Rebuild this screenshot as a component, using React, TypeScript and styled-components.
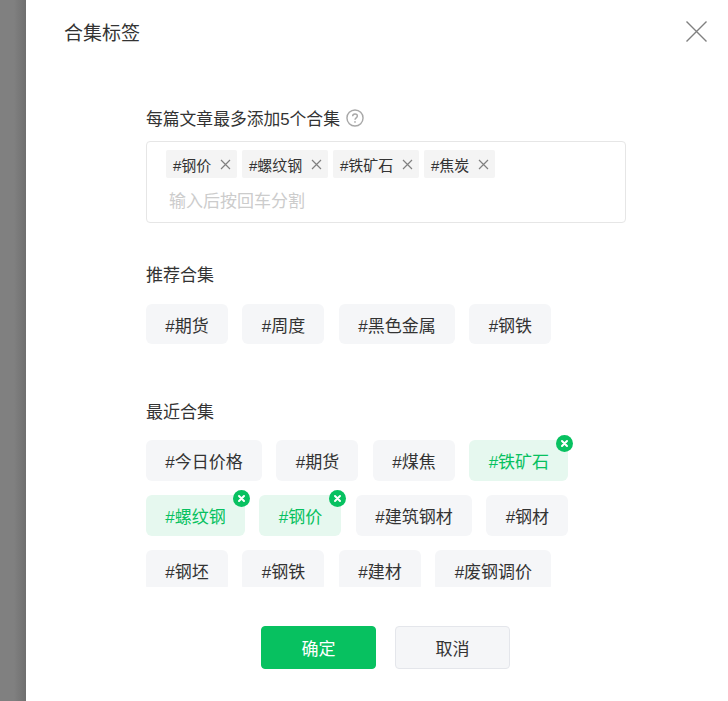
import React from "react";
import styled, { createGlobalStyle } from "styled-components";

const GlobalStyle = createGlobalStyle`
  html, body { margin: 0; padding: 0; height: 100%; background: #fff; }
  body { font-family: "Liberation Sans", "Noto Sans CJK SC", sans-serif; color: #333; }
  * { box-sizing: border-box; }
`;

const Page = styled.div`
  display: flex;
  width: 728px;
  height: 701px;
  overflow: hidden;
`;

const Scrim = styled.div`
  width: 26px;
  flex: none;
  background: linear-gradient(90deg, #808080 0, #808080 14px, #6f6f6f 26px);
`;

const Panel = styled.div`
  flex: 1;
  background: #fff;
  display: flex;
  flex-direction: column;
`;

const Header = styled.div`
  height: 64px;
  flex: none;
  display: flex;
  justify-content: space-between;
  padding: 21px 21px 0 38px;
`;

const Title = styled.div`
  font-size: 19px;
  line-height: 26px;
  color: #333;
`;

const CloseIcon = styled.svg`
  width: 21px;
  height: 21px;
  display: block;
`;

const Body = styled.div`
  height: 523px;
  flex: none;
  overflow: hidden;
  padding: 42px 0 0 120px;
`;

const LabelRow = styled.div`
  display: flex;
  align-items: center;
  gap: 6px;
  height: 24px;
  font-size: 16.8px;
  color: #333;
`;

const HelpIcon = styled.svg`
  width: 18px;
  height: 18px;
  display: block;
`;

const InputBox = styled.div`
  width: 480px;
  height: 82px;
  margin-top: 11px;
  border: 1px solid #e6e6e6;
  border-radius: 4px;
  padding: 8px 19px;
`;

const InputChips = styled.div`
  display: flex;
  gap: 5px;
`;

const InputChip = styled.div`
  display: flex;
  align-items: center;
  justify-content: space-between;
  height: 28px;
  padding: 0 5.66px 0 7px;
  gap: 9px;
  border-radius: 2px;
  background: #f4f4f4;
  font-size: 15px;
  color: #333;
`;

const ChipClose = styled.svg`
  width: 11px;
  height: 11px;
  display: block;
  flex: none;
`;

const Placeholder = styled.div`
  margin: 12px 0 0 3px;
  font-size: 17px;
  line-height: 24px;
  color: #ccc;
`;

const SectionTitle = styled.div<{ $top: number }>`
  margin-top: ${(p) => p.$top}px;
  height: 24px;
  line-height: 28px;
  font-size: 17px;
  color: #333;
`;

const TagList = styled.div`
  display: flex;
  flex-wrap: wrap;
  width: 480px;
  margin-top: 17.75px;
  column-gap: 14.5px;
  row-gap: 14.5px;
`;

const Tag = styled.div<{ $active?: boolean }>`
  position: relative;
  height: 40.5px;
  line-height: 45px;
  padding: 0 19.25px;
  border-radius: 6px;
  font-size: 17px;
  background: ${(p) => (p.$active ? "#e6f8ef" : "#f5f6f8")};
  color: ${(p) => (p.$active ? "#07c160" : "#333")};
`;

const TagBadge = styled.svg`
  position: absolute;
  top: -5px;
  right: -5px;
  width: 17px;
  height: 17px;
  display: block;
`;

const Footer = styled.div`
  display: flex;
  gap: 19px;
  padding: 39px 0 0 235px;
`;

const Button = styled.button<{ $primary?: boolean }>`
  width: 115px;
  height: 43px;
  padding: 0;
  border-radius: 4px;
  font-family: inherit;
  font-size: 17px;
  border: 1px solid ${(p) => (p.$primary ? "#07c160" : "#e4e6eb")};
  background: ${(p) => (p.$primary ? "#07c160" : "#f5f6f8")};
  color: ${(p) => (p.$primary ? "#fff" : "#333")};
`;

const SmallX = () => (
  <ChipClose viewBox="0 0 11 11">
    <path d="M1 1l9 9M10 1l-9 9" stroke="#808080" strokeWidth="1.2" fill="none" />
  </ChipClose>
);

const Badge = () => (
  <TagBadge viewBox="0 0 17 17">
    <circle cx="8.5" cy="8.5" r="8.5" fill="#07c160" />
    <path d="M6 6l5 5M11 6l-5 5" stroke="#fff" strokeWidth="2" strokeLinecap="round" fill="none" />
  </TagBadge>
);

const selected = ["#钢价", "#螺纹钢", "#铁矿石", "#焦炭"];
const recommended = ["#期货", "#周度", "#黑色金属", "#钢铁"];
const recent = [
  { name: "#今日价格" },
  { name: "#期货" },
  { name: "#煤焦" },
  { name: "#铁矿石", active: true },
  { name: "#螺纹钢", active: true },
  { name: "#钢价", active: true },
  { name: "#建筑钢材" },
  { name: "#钢材" },
  { name: "#钢坯" },
  { name: "#钢铁" },
  { name: "#建材" },
  { name: "#废钢调价" },
];

const App = () => {
  return (
    <Page>
      <GlobalStyle />
      <Scrim />
      <Panel>
        <Header>
          <Title>合集标签</Title>
          <CloseIcon viewBox="0 0 21 21">
            <path d="M0.5 0.5l20 20M20.5 0.5l-20 20" stroke="#808080" strokeWidth="1.4" fill="none" />
          </CloseIcon>
        </Header>
        <Body>
          <LabelRow>
            每篇文章最多添加5个合集
            <HelpIcon viewBox="0 0 19 19">
              <circle cx="9.5" cy="9.5" r="8.5" stroke="#a8a8a8" strokeWidth="1.5" fill="none" />
              <path
                d="M7 7.6c0-1.5 1.1-2.4 2.5-2.4s2.5.9 2.5 2.2c0 1.9-2.5 2-2.5 3.9"
                stroke="#a8a8a8"
                strokeWidth="1.5"
                fill="none"
              />
              <circle cx="9.5" cy="13.6" r="0.9" fill="#a8a8a8" />
            </HelpIcon>
          </LabelRow>
          <InputBox>
            <InputChips>
              {selected.map((name) => (
                <InputChip key={name}>
                  {name}
                  <SmallX />
                </InputChip>
              ))}
            </InputChips>
            <Placeholder>输入后按回车分割</Placeholder>
          </InputBox>
          <SectionTitle $top={39}>推荐合集</SectionTitle>
          <TagList>
            {recommended.map((name) => (
              <Tag key={name}>{name}</Tag>
            ))}
          </TagList>
          <SectionTitle $top={54.25}>最近合集</SectionTitle>
          <TagList>
            {recent.map((t) => (
              <Tag key={t.name} $active={t.active}>
                {t.name}
                {t.active && <Badge />}
              </Tag>
            ))}
          </TagList>
        </Body>
        <Footer>
          <Button $primary>确定</Button>
          <Button>取消</Button>
        </Footer>
      </Panel>
    </Page>
  );
};

export default App;
